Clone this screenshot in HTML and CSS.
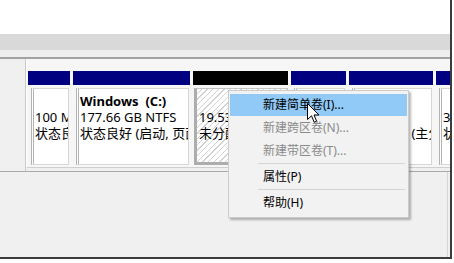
FILE: index.html
```html
<!DOCTYPE html>
<html lang="zh-CN">
<head>
<meta charset="utf-8">
<title>磁盘管理</title>
<link rel="stylesheet" href="styles.css">
</head>
<body>
<div class="window">
  <div class="top-pane"></div>
  <div class="splitter"></div>
  <div class="strip"></div>
  <div class="lower">
    <div class="disk-row">
      <div class="disk-label"></div>
      <div class="parts">
        <div class="col c1">
          <div class="bar"></div>
          <div class="box">
            <div class="ln"></div>
            <div class="ln">100 MB</div>
            <div class="ln">状态良好 (EFI 系统分区)</div>
          </div>
        </div>
        <div class="col c2">
          <div class="bar"></div>
          <div class="box">
            <div class="ln name">Windows  (C:)</div>
            <div class="ln">177.66 GB NTFS</div>
            <div class="ln">状态良好 (启动, 页面文件, 故障转储, 主分区)</div>
          </div>
        </div>
        <div class="col c3">
          <div class="bar black"></div>
          <div class="box sel">
            <div class="ln"></div>
            <div class="ln">19.53 GB</div>
            <div class="ln">未分配</div>
          </div>
        </div>
        <div class="col c4">
          <div class="bar"></div>
          <div class="box">
            <div class="ln"></div>
            <div class="ln">450 MB</div>
            <div class="ln">状态良好</div>
          </div>
        </div>
        <div class="col c5">
          <div class="bar"></div>
          <div class="box">
            <div class="ln"></div>
            <div class="ln">450 MB</div>
            <div class="ln">状态良好 (主分区)</div>
          </div>
        </div>
        <div class="col c6">
          <div class="bar"></div>
          <div class="box">
            <div class="ln"></div>
            <div class="ln">3.00 GB</div>
            <div class="ln">状态良好</div>
          </div>
        </div>
      </div>
    </div>
    <div class="below"></div>
  </div>

  <div class="menu">
    <div class="item hot">新建简单卷(I)...</div>
    <div class="item off">新建跨区卷(N)...</div>
    <div class="item off">新建带区卷(T)...</div>
    <div class="sep"></div>
    <div class="item">属性(P)</div>
    <div class="sep"></div>
    <div class="item">帮助(H)</div>
  </div>

  <svg class="cursor" width="13" height="21" viewBox="0 0 13 21">
    <path d="M0.5 0.5 V16.5 L4.5 12.8 L7.2 19.2 L9.6 18.2 L7 12 H12 Z" fill="#fff" stroke="#000" stroke-width="1" stroke-linejoin="miter"/>
  </svg>
</div>
</body>
</html>
```

FILE: styles.css
```css
* { box-sizing: border-box; }

html, body {
  margin: 0;
  padding: 0;
  background: #ffffff;
}

body {
  font-family: "Noto Sans", "Noto Sans CJK SC", sans-serif;
  font-size: 12px;
  color: #000;
}

.window {
  position: relative;
  width: 452px;
  height: 259px;
  border-right: 2px solid #3c3c3c;
  border-bottom: 2px solid #3c3c3c;
  background: #f0f0f0;
  overflow: hidden;
  display: flex;
  flex-direction: column;
}

.top-pane {
  height: 34px;
  background: #ffffff;
  flex: none;
}

.splitter {
  height: 16px;
  background: #d9d9d9;
  flex: none;
}

.strip {
  height: 7px;
  background: #eeeeee;
  flex: none;
}

.lower {
  flex: 1;
  display: flex;
  flex-direction: column;
  border-top: 2px solid #a2a2a2;
  background: #f0f0f0;
}

.disk-row {
  display: flex;
  height: 113px;
  flex: none;
  border-bottom: 1px solid #a9a9a9;
}

.disk-label {
  width: 26px;
  flex: none;
  background: #f0f0f0;
  border-right: 1px solid #c9c9c9;
}

.parts {
  flex: 1;
  align-self: flex-start;
  height: 109px;
  display: flex;
  gap: 3px;
  padding: 12px 0 0 1px;
  background: #f6f6f6;
  border-left: 1px solid #ffffff;
  border-bottom: 1px solid #cfcfcf;
  overflow: hidden;
}

.col {
  flex: none;
  display: flex;
  flex-direction: column;
}

.c1 { width: 42px; }
.c2 { width: 117px; }
.c3 { width: 95px; }
.c4 { width: 55px; }
.c5 { width: 84px; }
.c6 { width: 40px; }

.bar {
  height: 14px;
  background: #000080;
}

.bar.black {
  background: #000000;
}

.box {
  height: 77px;
  margin: 3px 1px 0 3px;
  padding: 4px 0 0 1px;
  background: #ffffff;
  border: 1px solid #d6d6d6;
  border-left: 3px double #b2b2b2;
  overflow: hidden;
  font-size: 13px;
  line-height: 16px;
  white-space: nowrap;
}

.box.sel {
  margin-left: 1px;
  margin-right: 0;
  padding-left: 2px;
  border: 1px solid #c4c4c4;
  border-left: 3px solid #adadad;
  border-bottom: 3px solid #adadad;
  background: repeating-linear-gradient(135deg, #ffffff 0 3px, #d2d2d2 3px 4px);
}

.ln {
  height: 16px;
  white-space: pre;
}

.ln.name {
  font-weight: 700;
}

.below {
  flex: 1;
  border-right: 1px solid #d6d6d6;
  margin-right: 2px;
}

.menu {
  position: absolute;
  left: 228px;
  top: 90px;
  width: 181px;
  padding: 2px 1px;
  background: #f2f2f2;
  border: 1px solid #cccccc;
  box-shadow: 2px 2px 2px rgba(0, 0, 0, 0.28);
}

.item {
  height: 22px;
  margin: 1px 0;
  line-height: 22px;
  padding-left: 33px;
  white-space: nowrap;
}

.item.hot {
  background: #91c9f7;
}

.item.off {
  color: #8a8a8a;
}

.sep {
  height: 1px;
  margin: 1px 2px 2px 28px;
  background: #d5d5d5;
}

.cursor {
  position: absolute;
  left: 307px;
  top: 103px;
}
```
